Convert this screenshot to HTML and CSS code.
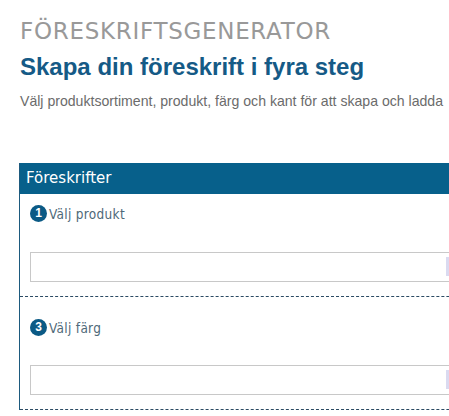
FILE: index.html
```html
<!DOCTYPE html>
<html lang="sv">
  <head>
    <meta charset="UTF-8" />
    <title>Föreskriftsgenerator</title>
    <link rel="stylesheet" href="styles.css">
  </head>
  <body>
    <div class="page">
      <h1 class="kicker">FÖRESKRIFTSGENERATOR</h1>
      <h2 class="heading">Skapa din föreskrift i fyra steg</h2>
      <p class="intro">Välj produktsortiment, produkt, färg och kant för att skapa och ladda</p>

      <div class="panel">
        <div class="panel-head">Föreskrifter</div>

        <div class="step">
          <div class="step-label"><span class="num">1</span>Välj produkt</div>
          <div class="select"><span class="select-btn"></span></div>
        </div>

        <div class="step step-next">
          <div class="step-label"><span class="num">3</span>Välj färg</div>
          <div class="select"><span class="select-btn"></span></div>
        </div>
      </div>
    </div>
  </body>
</html>
```

FILE: styles.css
```css
html,
body {
  margin: 0;
  padding: 0;
  overflow: hidden;
  background: #fff;
}

.page {
  width: 620px;
  padding: 18px 0 0 20px;
}

.kicker {
  margin: 0;
  font-family: "DejaVu Sans", sans-serif;
  font-weight: normal;
  font-size: 23px;
  line-height: 26px;
  letter-spacing: 0.7px;
  color: #999;
}

.heading {
  margin: 9px 0 0 0;
  font-family: "Liberation Sans", Arial, sans-serif;
  font-weight: bold;
  font-size: 24px;
  line-height: 28px;
  color: #155a86;
}

.intro {
  margin: 12px 0 0 0;
  font-family: "Liberation Sans", Arial, sans-serif;
  font-size: 14.1px;
  line-height: 17px;
  color: #6b6b6b;
  white-space: nowrap;
}

.panel {
  margin: 53px 0 0 -1px;
  border-left: 1px solid #1d5a7e;
}

.panel-head {
  background: #07608b;
  color: #fff;
  height: 31px;
  line-height: 31px;
  padding-left: 6px;
  font-family: "DejaVu Sans", sans-serif;
  font-size: 15px;
}

.step {
  padding: 11px 0 14px 10px;
  border-bottom: 1px dashed #2b4a63;
}

.step-next {
  padding-top: 22px;
}

.step-label {
  display: flex;
  align-items: center;
  height: 17px;
  font-family: "DejaVu Sans Condensed", "DejaVu Sans", sans-serif;
  font-size: 13.5px;
  letter-spacing: 0.3px;
  color: #4f6979;
}

.num {
  display: inline-block;
  width: 17px;
  height: 17px;
  border-radius: 50%;
  background: #0b5a85;
  color: #fff;
  font-family: "Liberation Sans", Arial, sans-serif;
  font-weight: bold;
  font-size: 12px;
  line-height: 17px;
  letter-spacing: 0;
  text-align: center;
  margin-right: 2px;
}

.select {
  margin-top: 30px;
  height: 28px;
  border: 1px solid #c8c8c8;
  position: relative;
}

.step-next .select {
  margin-top: 29px;
}

.select-btn {
  position: absolute;
  left: 415px;
  top: 4px;
  width: 10px;
  height: 19px;
  background: #dadaf0;
}
```
